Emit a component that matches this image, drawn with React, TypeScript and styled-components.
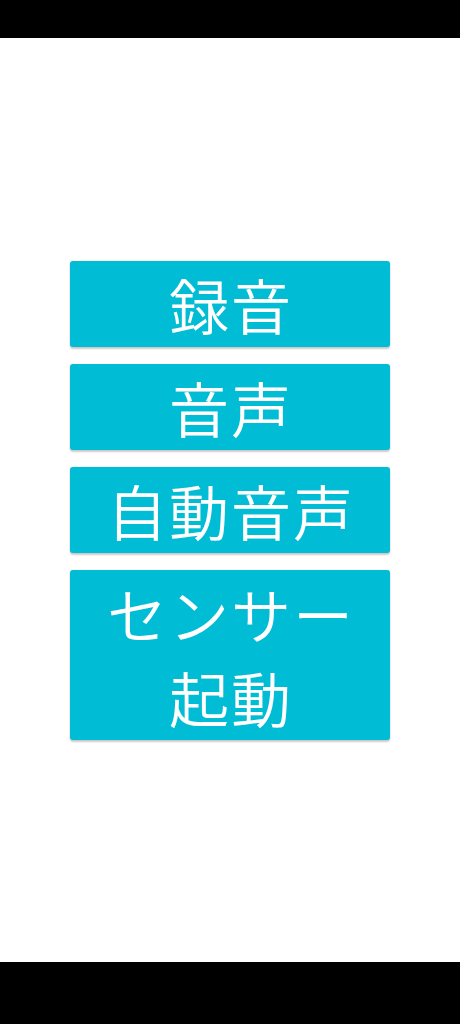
import React from "react";
import styled, { createGlobalStyle } from "styled-components";

const GlobalStyle = createGlobalStyle`
  html, body {
    margin: 0;
    padding: 0;
    background: #ffffff;
  }
  body {
    font-family: "Noto Sans CJK JP", "Noto Sans", sans-serif;
  }
  * { box-sizing: border-box; }
`;

const Screen = styled.div`
  width: 460px;
  height: 1024px;
  display: flex;
  flex-direction: column;
  background: #ffffff;
`;

const SystemBar = styled.div<{ $h: number }>`
  height: ${(p) => p.$h}px;
  flex: 0 0 auto;
  background: #000000;
`;

const Main = styled.main`
  flex: 1 1 auto;
  display: flex;
  align-items: center;
  justify-content: center;
`;

const ButtonStack = styled.div`
  width: 320px;
  display: flex;
  flex-direction: column;
  gap: 17px;
`;

const ActionButton = styled.button`
  width: 100%;
  border: none;
  margin: 0;
  padding: 1px 16px 1px 18px;
  background: #00bcd4;
  color: #ffffff;
  border-radius: 3px;
  box-shadow: 0 2px 2px rgba(0, 0, 0, 0.2), 0 0 2px rgba(0, 0, 0, 0.1);
  font-family: "Noto Sans CJK JP", "Noto Sans", sans-serif;
  font-size: 60px;
  font-weight: 350;
  letter-spacing: 2px;
  line-height: 84px;
  text-align: center;
  cursor: pointer;
`;

const labels = ["録音", "音声", "自動音声", "センサー起動"];

export default function App() {
  return (
    <>
      <GlobalStyle />
      <Screen>
        <SystemBar $h={38} />
        <Main>
          <ButtonStack>
            {labels.map((l) => (
              <ActionButton key={l}>{l}</ActionButton>
            ))}
          </ButtonStack>
        </Main>
        <SystemBar $h={62} />
      </Screen>
    </>
  );
}
